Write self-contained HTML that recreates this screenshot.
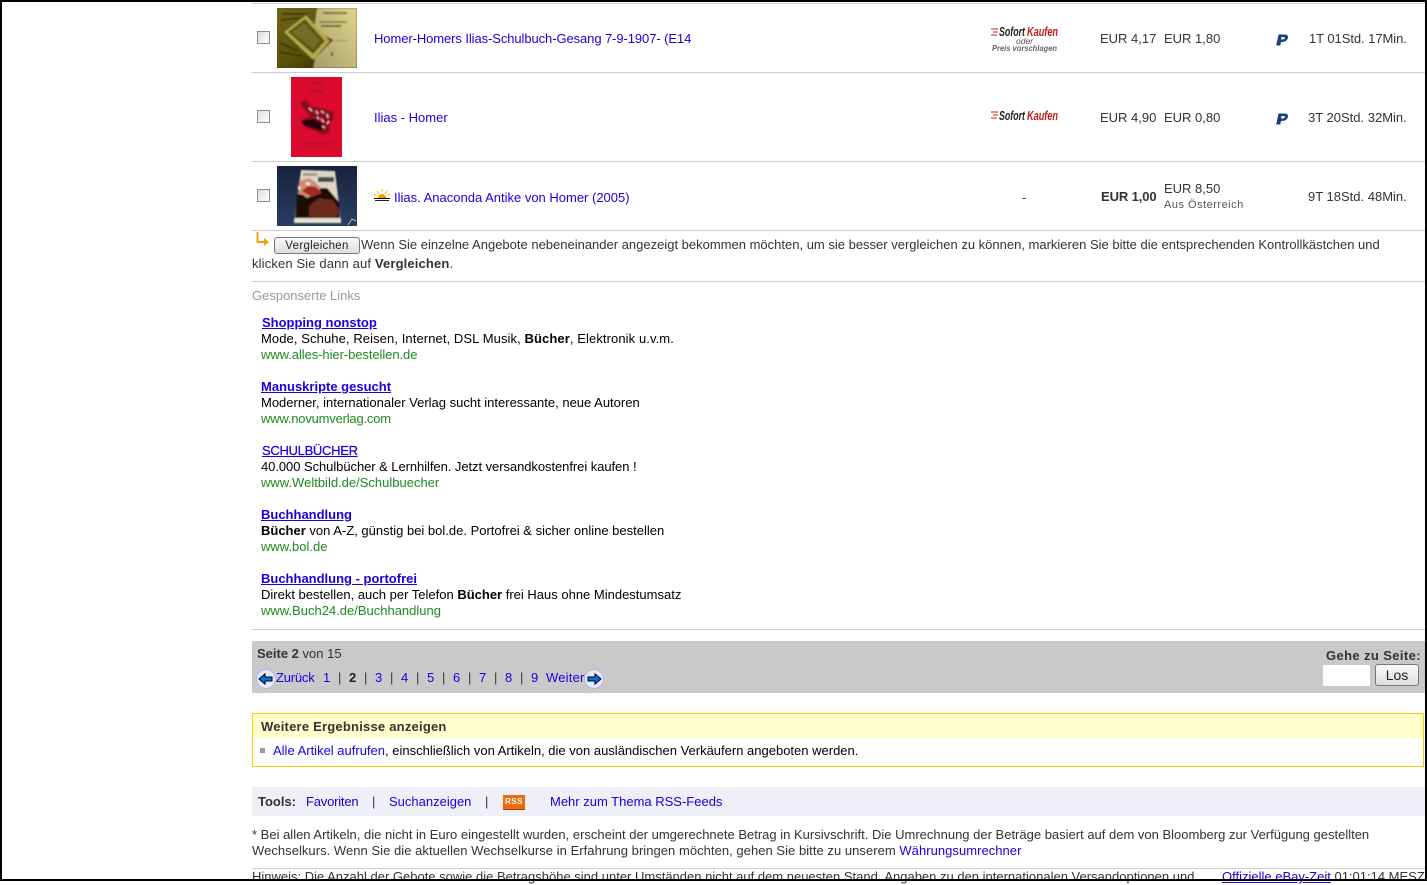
<!DOCTYPE html>
<html><head><meta charset="utf-8"><style>
html,body{margin:0;padding:0;background:#fff}
body{width:1427px;height:881px;position:relative;overflow:hidden;font-family:"Liberation Sans",Arial,sans-serif;font-size:13px;color:#333}
.t{position:absolute;white-space:nowrap;line-height:16px;margin-top:1px}
a{color:#1a00e0;text-decoration:none}
.hr{position:absolute;left:252px;width:1173px;height:1px;background:#ccc}
.ad{color:#1a00e0;font-weight:bold;text-decoration:underline;font-size:13px}
.b{color:#000}.g{color:#1e8a1e}
svg,.abs{position:absolute;display:block}
.cb{position:absolute;left:257px;width:11px;height:11px;border:1px solid #8f8f8f;background:linear-gradient(135deg,#ddd,#fff)}
.btn{position:absolute;box-sizing:border-box;border:1px solid #777;border-radius:3px;background:linear-gradient(#fafafa,#ddd);text-align:center;color:#222}
</style></head><body>
<svg width="0" height="0" style="position:absolute"><filter id="bl"><feGaussianBlur stdDeviation="0.7"/></filter></svg>
<div class="hr" style="top:3px"></div>
<div class="hr" style="top:72px"></div>
<div class="hr" style="top:161px"></div>
<div class="hr" style="top:230px"></div>
<div class="hr" style="top:281px"></div>
<div class="hr" style="top:629px"></div>
<div class="hr" style="top:868px"></div>

<div class="cb" style="top:31px"></div>
<div class="cb" style="top:110px"></div>
<div class="cb" style="top:189px"></div>

<svg style="left:277px;top:8px" width="80" height="60" viewBox="0 0 80 60"><defs><linearGradient id="g1" x1="0" x2="1" y1="0" y2="1"><stop offset="0" stop-color="#6e6418"/><stop offset=".5" stop-color="#5a520c"/><stop offset="1" stop-color="#241a02"/></linearGradient><linearGradient id="g2" x1="0" x2="1" y1="1" y2="0"><stop offset="0" stop-color="#a89c68"/><stop offset="1" stop-color="#e0d48c"/></linearGradient></defs><rect width="80" height="60" fill="url(#g1)"/><g filter="url(#bl)"><polygon points="40,0 80,0 80,60 36,60 38,50 56,32 37,22" fill="url(#g2)"/><polygon points="7,24 29,7 53,33 36,52" fill="#b4a84a"/><polygon points="11,24 28,11 48,33 36,46" fill="#5c5718"/><polygon points="15,24 27,15 43,32 36,41" fill="#736c28"/><rect x="46" y="4" width="24" height="2" fill="#777050"/><rect x="42" y="13" width="28" height="2" fill="#8d8550"/><rect x="44" y="17" width="20" height="2" fill="#6a6438"/><rect x="57" y="32" width="14" height="1" fill="#9a9260"/><rect x="54" y="44" width="2" height="4" fill="#555"/><path d="M5 6l26 0M4 12l20-2M3 35l18 8M3 44l22 4" stroke="#2c2606"/></g></svg>

<svg style="left:291px;top:77px" width="51" height="80" viewBox="0 0 51 80"><rect width="51" height="80" fill="#dc0a2e"/><g filter="url(#bl)"><rect x="20" y="5" width="11" height="1" fill="#901020"/><rect x="19" y="13" width="13" height="2" fill="#9c1426"/><path d="M10 25l6-2 3 6 9 2 8 2 7 2-1 8-4 5 1 7-7 3-7-4-9-3-5-4 1-5 7-3-5-6-3-4z" fill="#8a0c1e"/><path d="M10 44l12-2 10 5-2 7-8-3-8-2z" fill="#280408"/><path d="M18 31l3 3M25 34l2 3M30 34l3 2M36 37l1 4M30 42l3 3M26 40l2 2M31 49l3 2M38 44l-2 3" stroke="#f8c8d0" stroke-width="1.300"/><rect x="10" y="66" width="32" height="1" fill="#a01828"/><rect x="15" y="69" width="22" height="1" fill="#a81c2c"/></g></svg>

<svg style="left:277px;top:166px" width="80" height="60" viewBox="0 0 80 60"><defs><linearGradient id="g3" x1="0" x2="0" y1="0" y2="1"><stop offset="0" stop-color="#17233d"/><stop offset="1" stop-color="#2b3d63"/></linearGradient></defs><rect width="80" height="60" fill="url(#g3)"/><g filter="url(#bl)"><polygon points="24,4 58,5 64,56 17,57" fill="#dcd7c4"/><polygon points="21,22 50,22 62,36 63,52 18,52" fill="#1a0a06"/><path d="M22 15l10-3 6 4 6 6-4 6-10 4-4-3-5-1z" fill="#d08a72"/><path d="M25 25l6-5 8 1 6 6-10 4z" fill="#a02a20"/><path d="M28 17l3-1 3 2-3 2zM21 20l3 1-1 3-2-1z" fill="#f2e6da"/><path d="M32 40l10-8 14 2 6 10-2 7H32z" fill="#6c2a1e"/><rect x="17" y="53" width="47" height="4" fill="#e8e4d4"/><rect x="26" y="7" width="14" height="3" fill="#a09a88"/><rect x="41" y="11" width="16" height="5" fill="#4c4a44"/></g><path d="M71 59l4-6 4 2" stroke="#bbb" fill="none"/></svg>

<a class="t" style="left:374px;top:30px;letter-spacing:-.086px">Homer-Homers Ilias-Schulbuch-Gesang 7-9-1907- (E14</a>
<a class="t" style="left:374px;top:109px;">Ilias - Homer</a>
<svg style="left:374px;top:189px" width="16" height="12" viewBox="0 0 16 12"><path d="M8 0v3M3 2l2 3M13 2l-2 3M0 5l3 2M16 5l-3 2" stroke="#f5b800" fill="none"/><path d="M4 9a4 4 0 0 1 8 0z" fill="#f59a00"/><rect y="9" width="16" height="1" fill="#000"/><rect x="1" y="11" width="14" height="1" fill="#222"/></svg>
<a class="t" style="left:394px;top:189px;">Ilias. Anaconda Antike von Homer (2005)</a>

<!-- Sofort -->
<svg style="left:990px;top:24px" width="70" height="30" viewBox="0 0 70 30"><path d="M1 5h7M3 8h5M1 11h6" stroke="#d01818" fill="none"/>
<text x="9" y="12" font-family="Liberation Sans" font-style="italic" font-weight="bold" font-size="13" fill="#222" textLength="26" lengthAdjust="spacingAndGlyphs">Sofort</text>
<text x="37" y="12" font-family="Liberation Sans" font-style="italic" font-weight="bold" font-size="13" fill="#c81818" textLength="31" lengthAdjust="spacingAndGlyphs">Kaufen</text>
<text x="26" y="20" font-family="Liberation Sans" font-style="italic" font-size="8" fill="#555" textLength="17" lengthAdjust="spacingAndGlyphs">oder</text>
<text x="2" y="27" font-family="Liberation Sans" font-style="italic" font-weight="bold" font-size="8.5" fill="#666" textLength="65" lengthAdjust="spacingAndGlyphs">Preis vorschlagen</text></svg>
<svg style="left:990px;top:103px" width="70" height="20" viewBox="0 0 70 20"><path d="M1 9h7M3 12h5M1 15h6" stroke="#d01818" fill="none"/>
<text x="9" y="17" font-family="Liberation Sans" font-style="italic" font-weight="bold" font-size="13" fill="#222" textLength="26" lengthAdjust="spacingAndGlyphs">Sofort</text>
<text x="37" y="17" font-family="Liberation Sans" font-style="italic" font-weight="bold" font-size="13" fill="#c81818" textLength="31" lengthAdjust="spacingAndGlyphs">Kaufen</text></svg>
<div class="t" style="left:1022px;top:189px">-</div>

<div class="t" style="left:1100px;top:30px">EUR 4,17</div>
<div class="t" style="left:1164px;top:30px">EUR 1,80</div>
<div class="t" style="left:1100px;top:109px">EUR 4,90</div>
<div class="t" style="left:1164px;top:109px">EUR 0,80</div>
<div class="t" style="left:1101px;top:188px;letter-spacing:-.1px"><b>EUR 1,00</b></div>
<div class="t" style="left:1164px;top:180px">EUR 8,50</div>
<div class="t" style="left:1164px;top:196px;font-size:11px;color:#555;letter-spacing:.5px">Aus Österreich</div>

<svg style="left:1275px;top:33px" width="14" height="14" viewBox="0 0 14 14"><path d="M3.500 1.500h6c3 0 4 1.700 3.300 3.800-.8 2.500-2.800 3.700-6 3.700H6l-.7 3.500H1.200z" fill="#1b3f78"/><path d="M6.500 4h2.300c1.500 0 1.500 2.500-.8 2.500H6z" fill="#fff"/></svg>
<svg style="left:1275px;top:112px" width="14" height="14" viewBox="0 0 14 14"><path d="M3.500 1.500h6c3 0 4 1.700 3.300 3.800-.8 2.500-2.800 3.700-6 3.700H6l-.7 3.500H1.200z" fill="#1b3f78"/><path d="M6.500 4h2.300c1.500 0 1.500 2.500-.8 2.500H6z" fill="#fff"/></svg>

<div class="t" style="left:1309px;top:30px;letter-spacing:-.06px">1T 01Std. 17Min.</div>
<div class="t" style="left:1308px;top:109px">3T 20Std. 32Min.</div>
<div class="t" style="left:1308px;top:188px">9T 18Std. 48Min.</div>

<svg style="left:256px;top:232px" width="14" height="16" viewBox="0 0 14 16"><path d="M1.500 0v10H9" stroke="#f5a010" stroke-width="2" fill="none"/><path d="M8 6l5 4-5 4z" fill="#f5a010"/></svg>
<div class="btn" style="left:274px;top:237px;width:86px;height:17px;font-size:11.500px;line-height:17px;letter-spacing:.3px">Vergleichen</div>
<div class="t" style="left:361px;top:236px">Wenn Sie einzelne Angebote nebeneinander angezeigt bekommen möchten, um sie besser vergleichen zu können, markieren Sie bitte die entsprechenden Kontrollkästchen und</div>
<div class="t" style="left:252px;top:255px;letter-spacing:.14px">klicken Sie dann auf <b>Vergleichen</b>.</div>

<div class="t" style="left:252px;top:287px;color:#999">Gesponserte Links</div>

<div class="t" style="left:262px;top:314px"><span class="ad">Shopping nonstop</span></div>
<div class="t b" style="left:261px;top:330px;letter-spacing:.09px">Mode, Schuhe, Reisen, Internet, DSL Musik, <b>Bücher</b>, Elektronik u.v.m.</div>
<div class="t g" style="left:261px;top:346px;letter-spacing:-.07px">www.alles-hier-bestellen.de</div>

<div class="t" style="left:261px;top:378px"><span class="ad">Manuskripte gesucht</span></div>
<div class="t b" style="left:261px;top:394px">Moderner, internationaler Verlag sucht interessante, neue Autoren</div>
<div class="t g" style="left:261px;top:410px;letter-spacing:-.2px">www.novumverlag.com</div>

<div class="t" style="left:262px;top:442px"><span class="ad" style="font-weight:normal;letter-spacing:-.3px;-webkit-text-stroke:.25px #1a00e0">SCHULBÜCHER</span></div>
<div class="t b" style="left:261px;top:458px;letter-spacing:-.06px">40.000 Schulbücher &amp; Lernhilfen. Jetzt versandkostenfrei kaufen !</div>
<div class="t g" style="left:261px;top:474px">www.Weltbild.de/Schulbuecher</div>

<div class="t" style="left:261px;top:506px"><span class="ad">Buchhandlung</span></div>
<div class="t b" style="left:261px;top:522px"><b>Bücher</b> von A-Z, günstig bei bol.de. Portofrei &amp; sicher online bestellen</div>
<div class="t g" style="left:261px;top:538px">www.bol.de</div>

<div class="t" style="left:261px;top:570px"><span class="ad">Buchhandlung - portofrei</span></div>
<div class="t b" style="left:261px;top:586px">Direkt bestellen, auch per Telefon <b>Bücher</b> frei Haus ohne Mindestumsatz</div>
<div class="t g" style="left:261px;top:602px">www.Buch24.de/Buchhandlung</div>

<div class="abs" style="left:252px;top:641px;width:1173px;height:52px;background:#c9c9c9"></div>
<div class="t" style="left:257px;top:645px"><b>Seite 2</b> von 15</div>
<svg style="left:256px;top:669px" width="20" height="20" viewBox="0 0 20 20"><circle cx="10" cy="10" r="9.500" fill="#e4e8fa" stroke="#b4b8e0"/><path d="M3 10l6-5v3h7v4H9v3z" fill="#0a70f0" stroke="#000"/></svg>
<a class="t" style="left:276px;top:669px;letter-spacing:-.2px">Zurück</a>
<a class="t" style="left:323px;top:669px">1</a><div class="t" style="left:338px;top:669px">|</div>
<div class="t" style="left:349px;top:669px;color:#222;font-weight:bold">2</div><div class="t" style="left:364px;top:669px">|</div>
<a class="t" style="left:375px;top:669px">3</a><div class="t" style="left:390px;top:669px">|</div>
<a class="t" style="left:401px;top:669px">4</a><div class="t" style="left:416px;top:669px">|</div>
<a class="t" style="left:427px;top:669px">5</a><div class="t" style="left:442px;top:669px">|</div>
<a class="t" style="left:453px;top:669px">6</a><div class="t" style="left:468px;top:669px">|</div>
<a class="t" style="left:479px;top:669px">7</a><div class="t" style="left:494px;top:669px">|</div>
<a class="t" style="left:505px;top:669px">8</a><div class="t" style="left:520px;top:669px">|</div>
<a class="t" style="left:531px;top:669px">9</a>
<a class="t" style="left:546px;top:669px;letter-spacing:.2px">Weiter</a>
<svg style="left:584px;top:669px" width="20" height="20" viewBox="0 0 20 20"><circle cx="10" cy="10" r="9.500" fill="#e4e8fa" stroke="#b4b8e0"/><path d="M17 10l-6-5v3H4v4h7v3z" fill="#0a70f0" stroke="#000"/></svg>
<div class="t" style="left:1326px;top:647px;letter-spacing:.38px"><b>Gehe zu Seite:</b></div>
<div class="abs" style="left:1323px;top:665px;width:47px;height:21px;background:#fff"></div>
<div class="btn" style="left:1375px;top:664px;width:44px;height:22px;line-height:20px;font-size:14px">Los</div>

<div class="abs" style="left:252px;top:713px;width:1170px;height:52px;border:1px solid #ffcc00"></div>
<div class="abs" style="left:253px;top:714px;width:1170px;height:24px;background:#ffffcc"></div>
<div class="t" style="left:261px;top:718px;letter-spacing:.22px"><b>Weitere Ergebnisse anzeigen</b></div>
<div class="abs" style="left:260px;top:748px;width:5px;height:5px;background:#999"></div>
<div class="t b" style="left:273px;top:742px"><a>Alle Artikel aufrufen</a>, einschließlich von Artikeln, die von ausländischen Verkäufern angeboten werden.</div>

<div class="abs" style="left:252px;top:787px;width:1173px;height:29px;background:#eeeff7"></div>
<div class="t" style="left:258px;top:793px"><b>Tools:</b></div>
<a class="t" style="left:306px;top:793px;letter-spacing:-.2px">Favoriten</a><div class="t" style="left:372px;top:793px">|</div>
<a class="t" style="left:389px;top:793px">Suchanzeigen</a><div class="t" style="left:485px;top:793px">|</div>
<div class="abs" style="left:503px;top:795px;width:22px;height:14px;background:#f06a08;border-bottom:1px solid #a04000;color:#fff;font:bold 8px/14px 'Liberation Sans';text-align:center;letter-spacing:.5px">RSS</div>
<a class="t" style="left:550px;top:793px">Mehr zum Thema RSS-Feeds</a>

<div class="t" style="left:252px;top:826px">* Bei allen Artikeln, die nicht in Euro eingestellt wurden, erscheint der umgerechnete Betrag in Kursivschrift. Die Umrechnung der Beträge basiert auf dem von Bloomberg zur Verfügung gestellten</div>
<div class="t" style="left:252px;top:842px;letter-spacing:.04px">Wechselkurs. Wenn Sie die aktuellen Wechselkurse in Erfahrung bringen möchten, gehen Sie bitte zu unserem <a>Währungsumrechner</a></div>
<div class="t" style="left:252px;top:868px">Hinweis: Die Anzahl der Gebote sowie die Betragshöhe sind unter Umständen nicht auf dem neuesten Stand. Angaben zu den internationalen Versandoptionen und</div>
<div class="t" style="left:1222px;top:868px"><a style="text-decoration:underline">Offizielle eBay-Zeit</a> 01:01:14 MESZ</div>

<div class="abs" style="left:0;top:0;width:1427px;height:2px;background:#000"></div>
<div class="abs" style="left:0;bottom:0;width:1427px;height:2px;background:#000"></div>
<div class="abs" style="left:0;top:0;width:2px;height:881px;background:#000"></div>
<div class="abs" style="right:0;top:0;width:2px;height:881px;background:#000"></div>
</body></html>
